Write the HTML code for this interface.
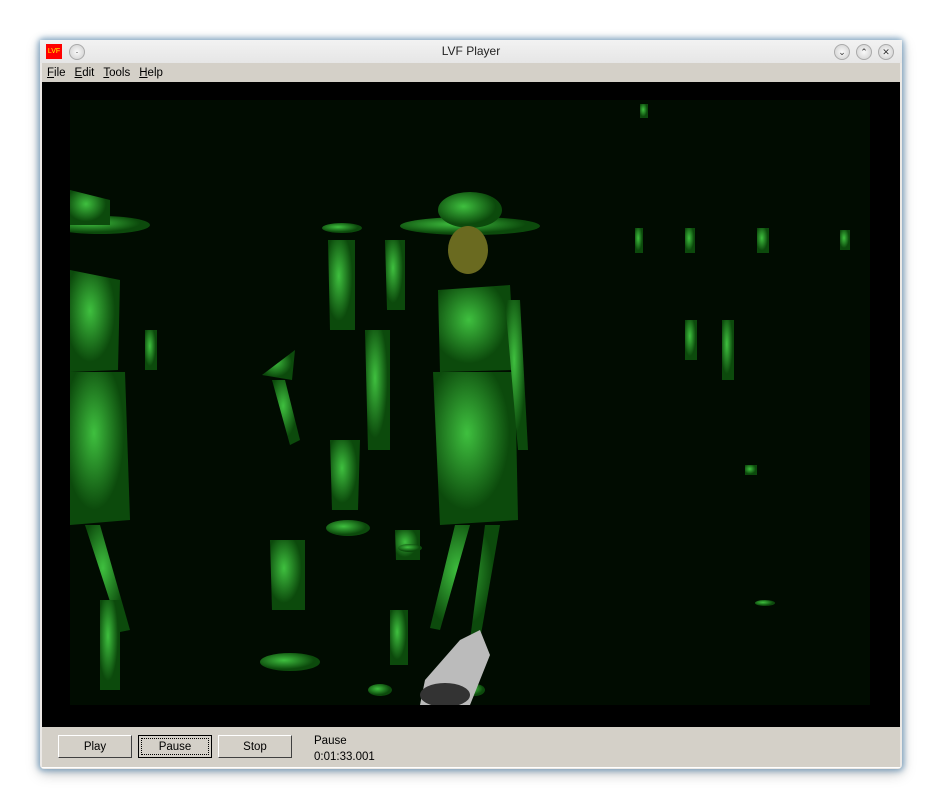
<!DOCTYPE html>
<html><head><style>
body{margin:0;width:942px;height:812px;background:#fff;font-family:"Liberation Sans",sans-serif;position:relative;overflow:hidden}
.win{position:absolute;left:40px;top:40px;width:862px;height:729px;background:#ece9e6;border-radius:4px;box-shadow:0 0 6px 2px rgba(90,140,180,.7),0 4px 14px rgba(0,0,0,.25)}
.title{position:absolute;left:0;top:0;width:862px;height:23px;background:linear-gradient(#f2f2f2,#e6e6e6);font-size:12px;color:#222;text-align:center;line-height:22px}
.logo{position:absolute;left:6px;top:4px;width:16px;height:15px;background:#f00;color:#ff0;font-size:7px;line-height:15px;text-align:center}
.rb{position:absolute;top:4px;width:14px;height:14px;border-radius:50%;background:radial-gradient(#fafafa,#ccc);border:1px solid #aaa;font-size:9px;line-height:14px;text-align:center;color:#333}
.menu{position:absolute;left:2px;top:23px;width:858px;height:19px;background:#d4d0c8;font-size:11.5px;line-height:20px}
.menu span{margin-left:5px;margin-right:4px}
.scene{position:absolute;left:2px;top:42px;width:858px;height:645px;background:#000}
.bar{position:absolute;left:2px;top:687px;width:858px;height:40px;background:#d4d0c8;border-bottom:1px solid #fff}
.btn{position:absolute;top:8px;width:74px;height:23px;background:#d4d0c8;border:1px solid;border-color:#fff #404040 #404040 #fff;font-size:11.5px;text-align:center;line-height:23px;box-sizing:border-box}
.lbl{position:absolute;left:272px;font-size:11.5px}
</style></head><body>
<div class="win">
<div class="title"><div class="logo">LVF</div><div class="rb" style="left:29px">·</div>LVF Player
<div class="rb" style="left:794px">⌄</div><div class="rb" style="left:816px">⌃</div><div class="rb" style="left:838px">✕</div></div>
<div class="menu"><span><u>F</u>ile</span><span><u>E</u>dit</span><span><u>T</u>ools</span><span><u>H</u>elp</span></div>
<div class="scene">
<svg width="858" height="645" viewBox="42 82 858 645">
<defs><radialGradient id="g" cx=".4" cy=".4"><stop offset="0" stop-color="#3fc03f"/><stop offset="1" stop-color="#0c4a0c"/></radialGradient>
<clipPath id="c"><rect x="70" y="100" width="800" height="605"/></clipPath></defs>
<rect x="70" y="100" width="800" height="605" fill="#010c01"/>
<g fill="url(#g)" clip-path="url(#c)">
<ellipse cx="470" cy="226" rx="70" ry="9"/><ellipse cx="470" cy="210" rx="32" ry="18"/>
<ellipse cx="468" cy="250" rx="20" ry="24" fill="#6a6a20"/>
<path d="M438 290 L510 285 L515 370 L440 372Z"/>
<path d="M433 372 L515 372 L518 520 L440 525Z"/>
<path d="M455 525 L470 525 L440 630 L430 628Z M485 525 L500 525 L480 640 L470 640Z"/>
<path d="M505 300 L520 300 L528 450 L518 450Z"/>
<ellipse cx="100" cy="225" rx="50" ry="9"/><path d="M70 190 L110 200 L110 225 L70 225Z"/>
<path d="M70 270 L120 280 L118 370 L70 372Z"/><path d="M70 372 L125 372 L130 520 L70 525Z"/>
<path d="M85 525 L100 525 L130 630 L120 632Z"/>
<ellipse cx="342" cy="228" rx="20" ry="5"/><path d="M328 240 L355 240 L355 330 L330 330Z"/>
<path d="M262 375 L295 350 L292 380Z"/><path d="M272 380 L285 380 L300 440 L290 445Z"/>
<path d="M330 440 L360 440 L358 510 L332 510Z"/><ellipse cx="348" cy="528" rx="22" ry="8"/>
<path d="M270 540 L305 540 L305 610 L272 610Z"/><ellipse cx="290" cy="662" rx="30" ry="9"/>
<path d="M385 240 L405 240 L405 310 L387 310Z"/><path d="M365 330 L390 330 L390 450 L368 450Z"/>
<path d="M390 610 L408 610 L408 665 L390 665Z"/>
<path d="M395 530 L420 530 L420 560 L396 560Z"/>
<ellipse cx="410" cy="548" rx="12" ry="4"/>
<ellipse cx="380" cy="690" rx="12" ry="6"/><ellipse cx="475" cy="690" rx="10" ry="6"/>
<rect x="685" y="228" width="10" height="25"/><rect x="757" y="228" width="12" height="25"/>
<rect x="635" y="228" width="8" height="25"/><rect x="840" y="230" width="10" height="20"/>
<rect x="685" y="320" width="12" height="40"/><rect x="722" y="320" width="12" height="60"/>
<rect x="145" y="330" width="12" height="40"/><rect x="640" y="104" width="8" height="14"/>
<rect x="745" y="465" width="12" height="10"/><ellipse cx="765" cy="603" rx="10" ry="3"/>
<rect x="100" y="600" width="20" height="90"/>
<path d="M425 680 L460 640 L480 630 L490 655 L470 705 L420 705Z" fill="#bbb"/>
<ellipse cx="445" cy="695" rx="25" ry="12" fill="#333"/>
</g>
</svg>
</div>
<div class="bar">
<div class="btn" style="left:16px">Play</div>
<div class="btn" style="left:96px;border:1px solid #000;outline:1px dotted #000;outline-offset:-4px">Pause</div>
<div class="btn" style="left:176px">Stop</div>
<div class="lbl" style="top:8px">Pause</div>
<div class="lbl" style="top:24px">0:01:33.001</div>
</div>
</div>
</body></html>
